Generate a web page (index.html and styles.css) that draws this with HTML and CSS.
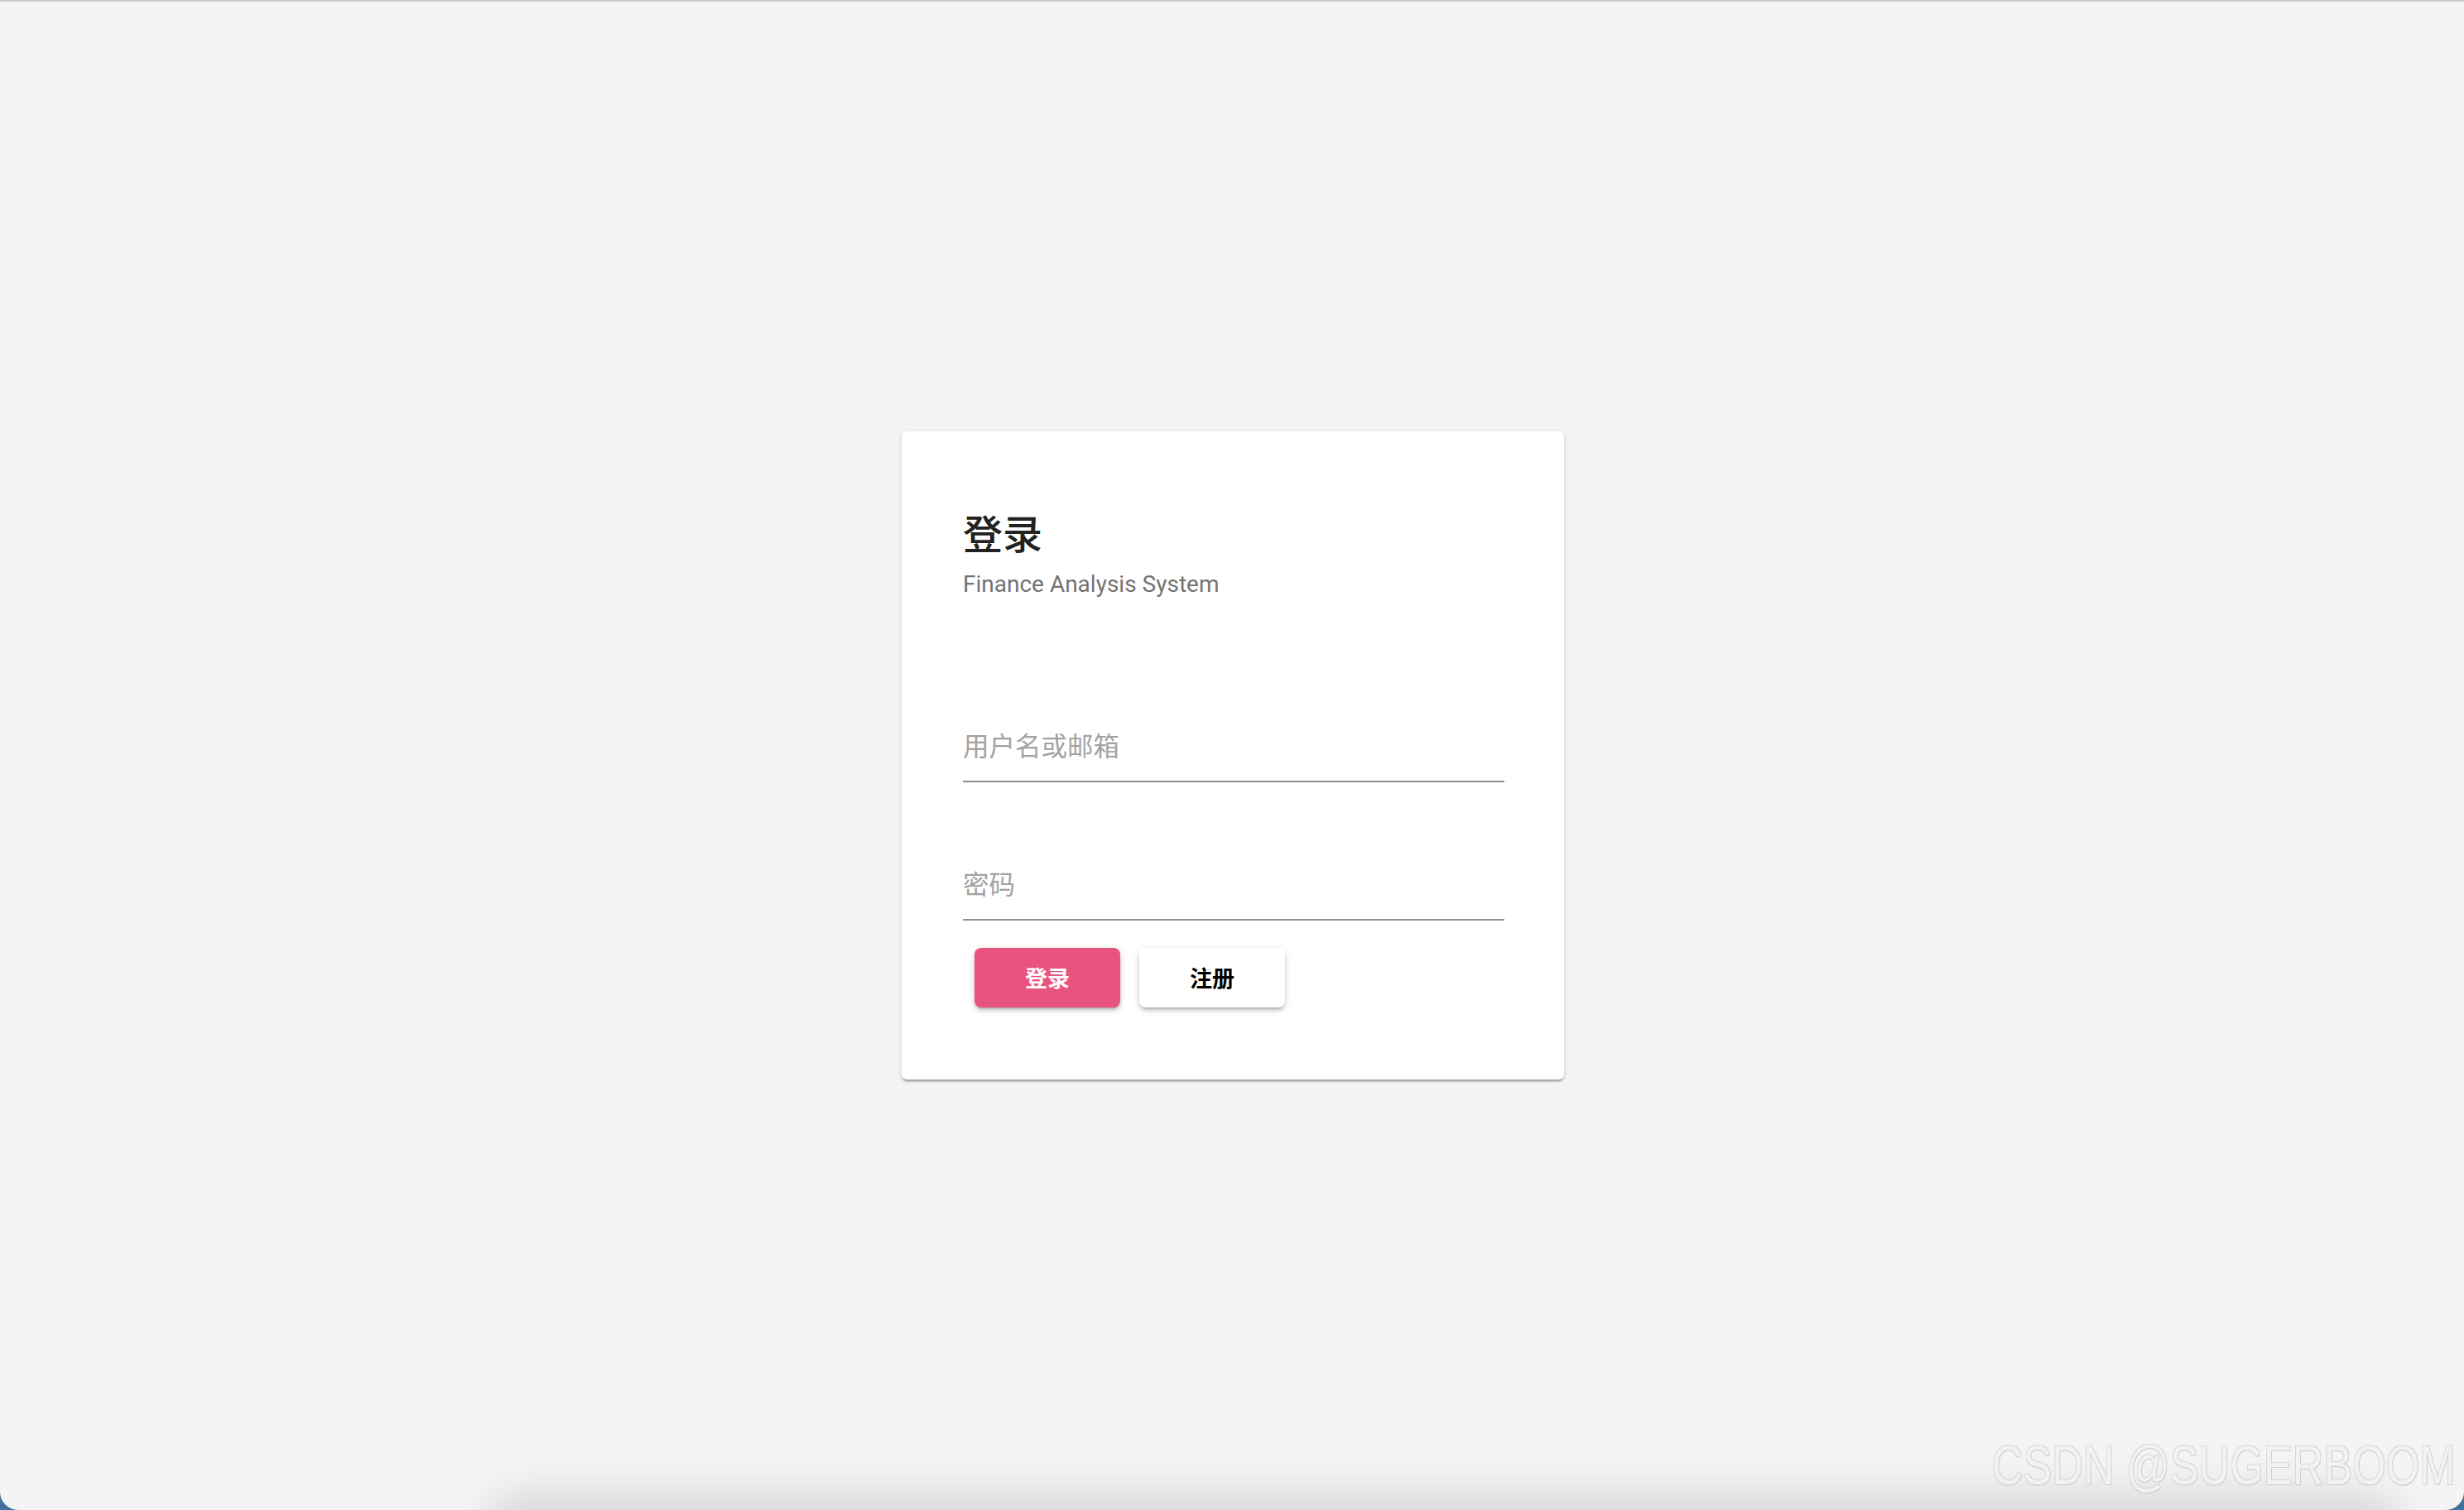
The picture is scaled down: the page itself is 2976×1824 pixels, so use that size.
FILE: index.html
```html
<!DOCTYPE html>
<html lang="zh-CN">
<head>
    <meta charset="UTF-8">
    <meta name="viewport" content="width=device-width, initial-scale=1.0">
    <title>登录 - Finance Analysis System</title>
    <link rel="stylesheet" href="styles.css">
</head>
<body>
    <div class="screen">
        <div class="login-card">
            <h1 class="card-title">登录</h1>
            <div class="card-subtitle">Finance Analysis System</div>

            <form class="login-form" onsubmit="return false;">
                <div class="form-field">
                    <input type="text" class="field-input" placeholder="用户名或邮箱">
                </div>
                <div class="form-field">
                    <input type="password" class="field-input" placeholder="密码">
                </div>
                <div class="form-actions">
                    <button class="btn btn-primary" type="submit">登录</button>
                    <button class="btn btn-plain" type="button">注册</button>
                </div>
            </form>
        </div>

        <div class="dock-shadow"></div>
        <div class="watermark">CSDN @SUGERBOOM</div>
    </div>
</body>
</html>
```

FILE: styles.css
```css
html {
    background-color: #41719b;
}

body {
    margin: 0;
    padding: 0;
    font-family: Roboto, "Noto Sans CJK SC", sans-serif;
    color: #212121;
}

.screen {
    position: relative;
    box-sizing: border-box;
    height: 1824px;
    background-color: #f4f4f4;
    border-top: 2px solid #cdcdcd;
    border-radius: 0 0 22px 22px;
    display: flex;
    align-items: center;
    justify-content: center;
    overflow: hidden;
}

.login-card {
    position: relative;
    z-index: 1;
    box-sizing: border-box;
    width: 800px;
    margin: -2px 0 0 2px;
    padding: 97px 72px 87px 74px;
    background-color: #fff;
    border-radius: 6px;
    box-shadow: 0 4px 2px -2px rgba(0, 0, 0, 0.2),
                0 2px 2px 0 rgba(0, 0, 0, 0.14),
                0 2px 6px 0 rgba(0, 0, 0, 0.12);
}

.card-title {
    margin: 0;
    font-family: "Noto Sans CJK SC", sans-serif;
    font-size: 48px;
    line-height: 48px;
    font-weight: 500;
    color: #222;
}

.card-subtitle {
    margin-top: 20px;
    font-size: 28px;
    line-height: 39px;
    color: #737373;
}

.login-form {
    margin-top: 159px;
}

.form-field + .form-field {
    margin-top: 106px;
}

.field-input {
    display: block;
    box-sizing: content-box;
    width: 100%;
    height: 34px;
    padding: 2px 0 23px 0;
    margin: 0;
    border: none;
    border-bottom: 2px solid #8f8f8f;
    outline: none;
    background: transparent;
    font-family: Roboto, "Noto Sans CJK SC", sans-serif;
    font-size: 31.5px;
    line-height: 34px;
    color: #212121;
}

.field-input::placeholder {
    color: #a2a2a2;
}

.form-actions {
    margin-top: 33px;
    padding-left: 14px;
    display: flex;
    gap: 23px;
}

.btn {
    width: 176px;
    height: 72px;
    border: none;
    border-radius: 8px;
    font-family: "Noto Sans CJK SC", sans-serif;
    font-size: 27px;
    font-weight: 700;
    cursor: pointer;
    box-shadow: 0 5px 2px -4px rgba(0, 0, 0, 0.2),
                0 4px 4px 0 rgba(0, 0, 0, 0.14),
                0 2px 10px 0 rgba(0, 0, 0, 0.12);
}

.btn-primary {
    background-color: #e95380;
    color: #fff;
}

.btn-plain {
    background-color: #fff;
    color: #000;
}

.dock-shadow {
    position: absolute;
    left: 600px;
    right: 90px;
    bottom: -70px;
    height: 70px;
    border-radius: 60px;
    box-shadow: 0 -6px 50px 14px rgba(0, 0, 0, 0.12);
}

.watermark {
    position: absolute;
    right: 10px;
    bottom: 21px;
    font-family: "Liberation Sans", sans-serif;
    font-size: 66px;
    line-height: 1;
    color: #f2f2f2;
    transform: scaleX(0.79);
    transform-origin: right bottom;
    text-shadow: 1px 1px 0 #cacaca, -1px -1px 0 #dadada,
                 1px -1px 0 #d4d4d4, -1px 1px 0 #d4d4d4;
    white-space: nowrap;
}
```
